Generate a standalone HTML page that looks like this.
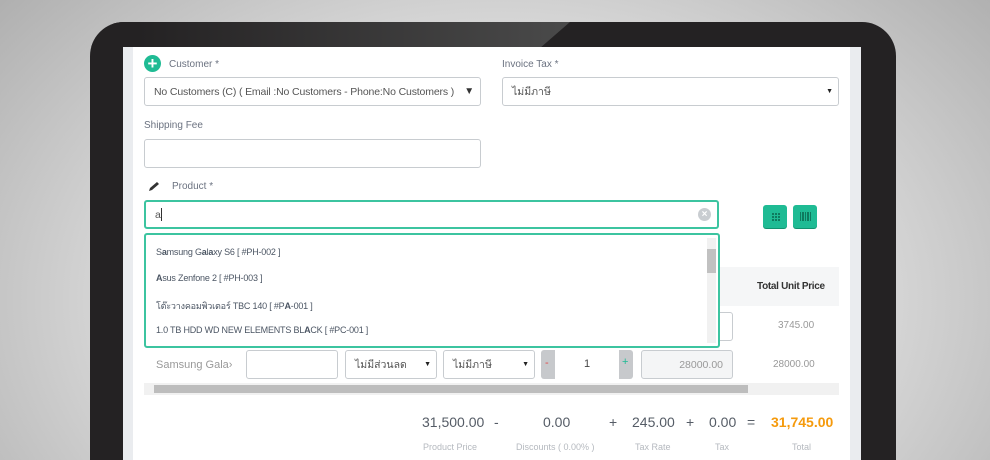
<!DOCTYPE html>
<html style="width:990px;height:460px;overflow:hidden;background:#c8c8c8"><head><meta charset="utf-8"><style>
*{box-sizing:border-box;margin:0;padding:0}
body{width:990px;height:460px;overflow:hidden;position:relative;font-family:"Liberation Sans","Noto Sans CJK SC",sans-serif;background:radial-gradient(ellipse 700px 500px at 500px 300px,#ececec 0%,#d6d6d6 55%,#a9a9a9 100%)}
.bezel{position:absolute;left:90px;top:22px;width:806px;height:438px;background:#242223;border-radius:34px 34px 0 0;overflow:hidden}
.glare{position:absolute;left:0;top:0;width:480px;height:25px;background:linear-gradient(90deg,#242223 10%,#4a4a4a 100%);clip-path:polygon(0 0,100% 0,94% 100%,0 100%)}
.screen{position:absolute;left:123px;top:47px;width:738px;height:413px;background:#fff;overflow:hidden}
.ls{position:absolute;left:0;top:0;width:10px;height:100%;background:#eaecef}
.rs{position:absolute;right:0;top:0;width:11px;height:100%;background:#eaecef}
.a{position:absolute}
.lbl{font-size:10px;color:#6b7280}
.inp{position:absolute;border:1px solid #c8ccd0;border-radius:3px;background:#fff;font-size:10.5px;color:#555;padding-left:9px;display:flex;align-items:center;white-space:nowrap;overflow:hidden}
.g{border:2px solid #3cc4a0}
.btn{position:absolute;width:24px;height:23px;background:#1fbb94;border-radius:3px;box-shadow:0 1px 0 #12926f}
.it{position:absolute;left:10px;font-size:9px;color:#4b5563;letter-spacing:-.2px}
.num{position:absolute;font-size:14px;color:#555c66}
.cap{position:absolute;font-size:9px;color:#b5b9bf}
</style></head><body>
<div class="bezel"><div class="glare"></div></div>
<div class="screen">
 <div class="ls"></div><div class="rs"></div>
 <div class="a" style="left:21px;top:8px;width:17px;height:17px;border-radius:50%;background:#1fbb94;color:#fff;font-size:17px;line-height:17px;text-align:center;font-weight:bold">+</div>
 <div class="a lbl" style="left:46px;top:12px">Customer *</div>
 <div class="inp" style="left:21px;top:30px;width:337px;height:29px;letter-spacing:-.15px">No Customers (C) ( Email :No Customers - Phone:No Customers )<span style="position:absolute;right:0;padding:0 6px 0 8px;background:#fff;font-size:10px;color:#333">▼</span></div>
 <div class="a lbl" style="left:379px;top:12px">Invoice Tax *</div>
 <div class="inp" style="left:379px;top:30px;width:337px;height:29px">ไม่มีภาษี<span style="position:absolute;right:5px;font-size:7px;color:#222">▼</span></div>
 <div class="a lbl" style="left:21px;top:73px">Shipping Fee</div>
 <div class="inp" style="left:21px;top:92px;width:337px;height:29px"></div>
 <svg class="a" style="left:24px;top:134px" width="14" height="12"><path d="M2 10 L3 7 L10 1 L12 3 L5 9 Z" fill="#333"/></svg>
 <div class="a lbl" style="left:49px;top:134px">Product *</div>
 <div class="inp g" style="left:21px;top:153px;width:575px;height:29px">a<span style="display:inline-block;width:1px;height:13px;background:#333"></span>
  <span style="position:absolute;right:6px;top:6px;width:13px;height:13px;border-radius:50%;background:#c9cdd1;color:#fff;font-size:10px;line-height:13px;text-align:center;font-weight:bold">×</span></div>
 <div class="btn" style="left:640px;top:158px"><svg width="24" height="23"><g fill="#0e7a5e"><rect x="9" y="8" width="2" height="2"/><rect x="12" y="8" width="2" height="2"/><rect x="15" y="8" width="2" height="2"/><rect x="9" y="11" width="2" height="2"/><rect x="12" y="11" width="2" height="2"/><rect x="15" y="11" width="2" height="2"/><rect x="9" y="14" width="2" height="2"/><rect x="12" y="14" width="2" height="2"/><rect x="15" y="14" width="2" height="2"/></g></svg></div>
 <div class="btn" style="left:670px;top:158px"><svg width="24" height="23"><g fill="#0e7a5e"><rect x="7" y="7" width="1" height="9"/><rect x="9" y="7" width="2" height="9"/><rect x="12" y="7" width="1" height="9"/><rect x="14" y="7" width="2" height="9"/><rect x="17" y="7" width="1" height="9"/></g></svg></div>
 <div class="a" style="left:21px;top:220px;width:695px;height:39px;background:#f5f6f7"></div>
 <div class="a" style="left:634px;top:234px;font-size:10px;color:#333;font-weight:bold;letter-spacing:-.3px">Total Unit Price</div>
 <div class="inp" style="left:560px;top:265px;width:50px;height:29px"></div>
 <div class="a" style="left:655px;top:273px;font-size:10px;color:#999">3745.00</div>
 <div class="a" style="left:33px;top:312px;font-size:11px;color:#999">Samsung Gala›</div>
 <div class="inp" style="left:123px;top:303px;width:92px;height:29px"></div>
 <div class="inp" style="left:222px;top:303px;width:92px;height:29px">ไม่มีส่วนลด<span style="position:absolute;right:5px;font-size:7px;color:#222">▼</span></div>
 <div class="inp" style="left:320px;top:303px;width:92px;height:29px">ไม่มีภาษี<span style="position:absolute;right:5px;font-size:7px;color:#222">▼</span></div>
 <div class="a" style="left:418px;top:303px;width:92px;height:29px;border-radius:3px;background:#c7c9cc"></div>
 <div class="a" style="left:432px;top:303px;width:64px;height:29px;background:#fff;text-align:center;line-height:29px;font-size:11px;color:#444">1</div>
 <div class="a" style="left:422px;top:310px;color:#e24b4b;font-size:11px">-</div>
 <div class="a" style="left:499px;top:309px;color:#1fbb94;font-size:11px">+</div>
 <div class="inp" style="left:518px;top:303px;width:92px;height:29px;background:#f4f5f6;justify-content:flex-end;padding-right:9px;color:#999">28000.00</div>
 <div class="a" style="left:650px;top:312px;font-size:10px;color:#999">28000.00</div>
 <div class="a" style="left:21px;top:336px;width:695px;height:12px;background:#f1f1f1"></div>
 <div class="a" style="left:31px;top:338px;width:594px;height:8px;background:#bdbdbd"></div>
 <div class="a g" style="left:21px;top:186px;width:576px;height:115px;background:#fff;border-radius:3px">
  <div class="it" style="top:12px">S<b>a</b>msung G<b>a</b>l<b>a</b>xy S6 [ #PH-002 ]</div>
  <div class="it" style="top:38px"><b>A</b>sus Zenfone 2 [ #PH-003 ]</div>
  <div class="it" style="top:64px">โต๊ะวางคอมพิวเตอร์ TBC 140 [ #P<b>A</b>-001 ]</div>
  <div class="it" style="top:90px">1.0 TB HDD WD NEW ELEMENTS BL<b>A</b>CK [ #PC-001 ]</div>
  <div class="a" style="right:2px;top:3px;width:9px;height:105px;background:#f1f1f1"></div>
  <div class="a" style="right:2px;top:14px;width:9px;height:24px;background:#c1c1c1"></div>
 </div>
 <div class="num" style="left:299px;top:367px">31,500.00</div>
 <div class="num" style="left:371px;top:367px">-</div>
 <div class="num" style="left:420px;top:367px">0.00</div>
 <div class="num" style="left:486px;top:367px">+</div>
 <div class="num" style="left:509px;top:367px">245.00</div>
 <div class="num" style="left:563px;top:367px">+</div>
 <div class="num" style="left:586px;top:367px">0.00</div>
 <div class="num" style="left:624px;top:367px">=</div>
 <div class="num" style="left:648px;top:367px;color:#f59a0c;font-weight:bold">31,745.00</div>
 <div class="cap" style="left:300px;top:395px">Product Price</div>
 <div class="cap" style="left:393px;top:395px">Discounts ( 0.00% )</div>
 <div class="cap" style="left:512px;top:395px">Tax Rate</div>
 <div class="cap" style="left:592px;top:395px">Tax</div>
 <div class="cap" style="left:669px;top:395px">Total</div>
</div>
</body></html>
